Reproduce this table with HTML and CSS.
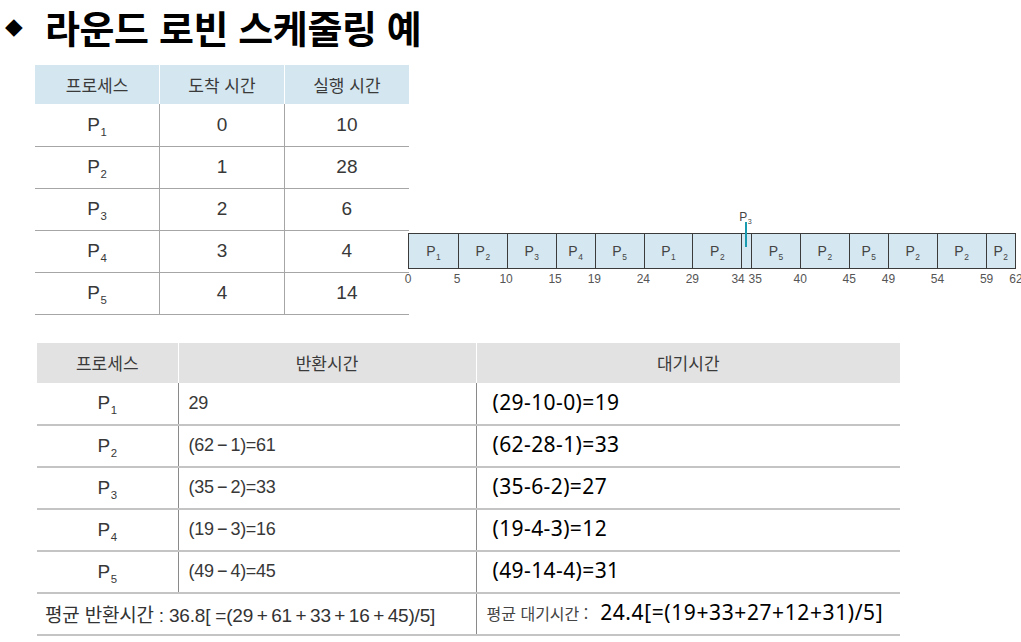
FILE: index.html
```html
<!DOCTYPE html>
<html lang="ko">
<head>
<meta charset="utf-8">
<title>라운드 로빈 스케줄링 예</title>
<link rel="stylesheet" href="styles.css">
</head>
<body>
<h1 class="title"><span class="bullet">◆</span><span class="title-text">라운드 로빈 스케줄링 예</span></h1>

<div class="middle">
  <table class="proc">
    <thead>
      <tr><th>프로세스</th><th>도착 시간</th><th>실행 시간</th></tr>
    </thead>
    <tbody>
      <tr><td>P<sub>1</sub></td><td>0</td><td>10</td></tr>
      <tr><td>P<sub>2</sub></td><td>1</td><td>28</td></tr>
      <tr><td>P<sub>3</sub></td><td>2</td><td>6</td></tr>
      <tr><td>P<sub>4</sub></td><td>3</td><td>4</td></tr>
      <tr><td>P<sub>5</sub></td><td>4</td><td>14</td></tr>
    </tbody>
  </table>

  <div class="gantt">
    <div class="p3mark" style="left:55.645%"><span class="p3label">P<sub>3</sub></span><span class="p3line"></span></div>
    <div class="bar">
      <div class="seg" style="width:8.0645%"><span>P<sub>1</sub></span></div>
      <div class="seg" style="width:8.0645%"><span>P<sub>2</sub></span></div>
      <div class="seg" style="width:8.0645%"><span>P<sub>3</sub></span></div>
      <div class="seg" style="width:6.4516%"><span>P<sub>4</sub></span></div>
      <div class="seg" style="width:8.0645%"><span>P<sub>5</sub></span></div>
      <div class="seg" style="width:8.0645%"><span>P<sub>1</sub></span></div>
      <div class="seg" style="width:8.0645%"><span>P<sub>2</sub></span></div>
      <div class="seg" style="width:1.6129%"></div>
      <div class="seg" style="width:8.0645%"><span>P<sub>5</sub></span></div>
      <div class="seg" style="width:8.0645%"><span>P<sub>2</sub></span></div>
      <div class="seg" style="width:6.4516%"><span>P<sub>5</sub></span></div>
      <div class="seg" style="width:8.0645%"><span>P<sub>2</sub></span></div>
      <div class="seg" style="width:8.0645%"><span>P<sub>2</sub></span></div>
      <div class="seg" style="width:4.8387%"><span>P<sub>2</sub></span></div>
    </div>
    <div class="ticks">
      <span style="left:0%">0</span>
      <span style="left:8.0645%">5</span>
      <span style="left:16.129%">10</span>
      <span style="left:24.194%">15</span>
      <span style="left:30.645%">19</span>
      <span style="left:38.710%">24</span>
      <span style="left:46.774%">29</span>
      <span class="shift-l" style="left:54.839%">34</span>
      <span class="shift-r" style="left:56.452%">35</span>
      <span style="left:64.516%">40</span>
      <span style="left:72.581%">45</span>
      <span style="left:79.032%">49</span>
      <span style="left:87.097%">54</span>
      <span style="left:95.161%">59</span>
      <span style="left:100%">62</span>
    </div>
  </div>
</div>

<table class="result">
  <thead>
    <tr><th class="c1">프로세스</th><th class="c2">반환시간</th><th class="c3">대기시간</th></tr>
  </thead>
  <tbody>
    <tr><td class="c1">P<sub>1</sub></td><td class="c2">29</td><td class="c3">(29-10-0)=19</td></tr>
    <tr><td class="c1">P<sub>2</sub></td><td class="c2">(62&#8201;−&#8201;1)=61</td><td class="c3">(62-28-1)=33</td></tr>
    <tr><td class="c1">P<sub>3</sub></td><td class="c2">(35&#8201;−&#8201;2)=33</td><td class="c3">(35-6-2)=27</td></tr>
    <tr><td class="c1">P<sub>4</sub></td><td class="c2">(19&#8201;−&#8201;3)=16</td><td class="c3">(19-4-3)=12</td></tr>
    <tr><td class="c1">P<sub>5</sub></td><td class="c2">(49&#8201;−&#8201;4)=45</td><td class="c3">(49-14-4)=31</td></tr>
    <tr class="avg">
      <td class="avg-turn" colspan="2">평균 반환시간 : 36.8[ =(29&#8201;+&#8201;61&#8201;+&#8201;33&#8201;+&#8201;16&#8201;+&#8201;45)/5]</td>
      <td class="c3"><span class="avg-label">평균 대기시간 :</span> <span class="avg-value">24.4[=(19+33+27+12+31)/5]</span></td>
    </tr>
  </tbody>
</table>
</body>
</html>
```

FILE: styles.css
```css
* { box-sizing: border-box; }

html, body {
  margin: 0;
  padding: 0;
  background: #ffffff;
}

body {
  width: 1021px;
  height: 642px;
  overflow: hidden;
  font-family: "Liberation Sans", "Noto Sans CJK KR", sans-serif;
  color: #333;
}

.title {
  margin: 0;
  height: 52px;
  padding-left: 5px;
  display: flex;
  align-items: center;
  font-family: "Noto Sans CJK KR", sans-serif;
  font-weight: 700;
  font-size: 38px;
  color: #000;
}

.bullet {
  font-family: "DejaVu Sans", sans-serif;
  font-size: 23px;
  width: 40px;
  line-height: 1;
}

.title-text {
  letter-spacing: -0.4px;
}

sub {
  font-size: 0.6em;
  vertical-align: -0.45em;
  line-height: 0;
  margin-left: 0.5px;
}

/* ---------- middle section ---------- */
.middle {
  display: flex;
  align-items: flex-start;
  margin-top: 13px;
  padding-left: 35px;
}

.proc {
  border-collapse: collapse;
  width: 374px;
  table-layout: fixed;
}

.proc th {
  height: 39px;
  background: #d4e6ef;
  font-family: "Noto Sans CJK KR", sans-serif;
  font-weight: 400;
  font-size: 17px;
  color: #3a3a3a;
  padding: 0;
  border-left: 1px solid #fff;
}

.proc th:first-child { border-left: none; }

.proc td {
  height: 42px;
  padding: 0;
  text-align: center;
  font-size: 19px;
  color: #383838;
  border-bottom: 1px solid #a6a6a6;
  border-left: 1px solid #a6a6a6;
}

.proc td:first-child { border-left: none; }

/* ---------- gantt ---------- */
.gantt {
  position: relative;
  width: 608px;
  margin-left: -1px;
  margin-top: 168px;
  font-family: "Liberation Sans", sans-serif;
}

.bar {
  display: flex;
  height: 36px;
  border: 1.5px solid #3b3b3b;
  background: #d5e7f0;
}

.seg {
  flex: none;
  display: flex;
  align-items: center;
  justify-content: center;
  border-left: 1.5px solid #3b3b3b;
  font-size: 14px;
  color: #444;
}

.seg:first-child { border-left: none; }

.seg span { line-height: 1; }

.ticks {
  position: relative;
  height: 18px;
  margin-top: 3px;
  font-size: 12px;
  color: #555;
}

.ticks span {
  position: absolute;
  top: 0;
  transform: translateX(-50%);
}

.ticks .shift-l { transform: translateX(-75%); }
.ticks .shift-r { transform: translateX(-20%); }

.p3mark {
  position: absolute;
  top: -22px;
  width: 0;
}

.p3label {
  position: absolute;
  left: -7px;
  top: -1px;
  font-size: 12px;
  color: #444;
  white-space: nowrap;
}

.p3line {
  position: absolute;
  left: -1px;
  top: 11px;
  width: 1.5px;
  height: 25px;
  background: #1a9bb0;
}

/* ---------- result table ---------- */
.result {
  margin-top: 28px;
  margin-left: 37px;
  border-collapse: collapse;
  table-layout: fixed;
  width: 863px;
}

.result th {
  height: 40px;
  padding: 0;
  background: #e2e2e2;
  font-family: "Noto Sans CJK KR", sans-serif;
  font-weight: 400;
  font-size: 17px;
  color: #3a3a3a;
  border-left: 1px solid #fff;
}

.result th.c1 { width: 141px; border-left: none; }
.result th.c2 { width: 298px; }
.result th.c3 { width: 424px; }

.result td {
  height: 42px;
  padding: 0;
  border-bottom: 2px solid #c4c4c4;
  font-size: 18px;
  color: #383838;
}

.result td.c1 {
  text-align: center;
  font-size: 19px;
}

.result td.c2 {
  padding-left: 10px;
  border-left: 1px solid #8a8a8a;
  border-right: 1px solid #8a8a8a;
  letter-spacing: -0.3px;
}

.result td.c3 {
  padding-left: 16px;
  padding-bottom: 3px;
  font-family: "Noto Sans", "Noto Sans CJK KR", sans-serif;
  font-size: 21px;
  color: #000;
  letter-spacing: 0.4px;
}

.avg td { height: 42px; }

.result td.avg-turn {
  padding-left: 8px;
  font-family: "Liberation Sans", "Noto Sans CJK KR", sans-serif;
  font-size: 19px;
  color: #333;
  letter-spacing: -0.2px;
  border-right: 1px solid #8a8a8a;
}

.result td.c3 .avg-label {
  font-family: "Noto Sans CJK KR", sans-serif;
  font-size: 16px;
  color: #444;
  letter-spacing: 0;
  margin-left: -6px;
}

.avg-value {
  margin-left: 6px;
  letter-spacing: 0.6px;
}
```
